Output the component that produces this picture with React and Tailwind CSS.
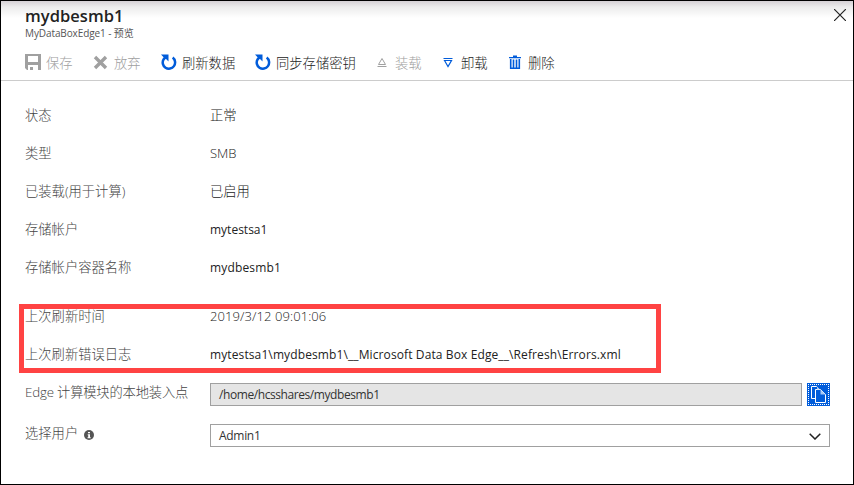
const SANS = "font-['Open_Sans','Noto_Sans_CJK_SC',sans-serif]";

function SaveIcon() {
  return (
    <svg width="16" height="16" viewBox="0 0 16 16" fill="#a0a0a0" className="shrink-0">
      <path fillRule="evenodd" d="M0 0h16v16h-3v-5H3v5H2L0 14zM3 2v6h10V2z" />
      <path d="M5 13h3v3H5z" />
    </svg>
  );
}

function DiscardIcon() {
  return (
    <svg width="15" height="15" viewBox="0 0 15 15" className="shrink-0">
      <path d="M2 2l11 11M13 2L2 13" stroke="#a0a0a0" strokeWidth="3.400" fill="none" />
    </svg>
  );
}

function RefreshIcon() {
  return (
    <svg width="16" height="17" viewBox="0 0 16 17" className="shrink-0">
      <path d="M11.700 3.600A6.200 6.200 0 1 1 2.600 5.300L4.600 3.200" stroke="#015cda" strokeWidth="2.500" fill="none" />
      <path d="M0 .5H7.500V7.500L5.300 5.200 3 3.800z" fill="#015cda" />
    </svg>
  );
}

function TriangleIcon({ up }) {
  return (
    <svg width="10" height="11" viewBox="0 0 10 11" fill="none" className="shrink-0">
      {up ? (
        <path d="M1.500 7.500L5 1.500l3.500 6zM.5 9.500h9" stroke="#a0a0a0" />
      ) : (
        <path d="M1.500 3.500L5 9.500l3.500-6zM.5 1.500h9" stroke="#015cda" strokeWidth="1.200" />
      )}
    </svg>
  );
}

function TrashIcon() {
  return (
    <svg width="12" height="15" viewBox="0 0 12 15" className="shrink-0">
      <path d="M4 .5h4V2h4v1.300H0V2h4z" fill="#015cda" />
      <path d="M1.700 4v9.300h8.600V4M4.500 4.500v8M7.500 4.500v8" stroke="#015cda" strokeWidth="1.600" fill="none" />
    </svg>
  );
}

function Command({ icon, label, disabled, width, gap }) {
  return (
    <div className={`flex h-5 items-center ${width} ${gap} ${disabled ? "text-[#a0a0a0]" : "text-[#222]"}`}>
      {icon}
      <span className="pt-[3px] whitespace-nowrap text-[13.300px] font-light">{label}</span>
    </div>
  );
}

function Row({ label, children }) {
  return (
    <div className="flex h-[38px] items-center">
      <div className="w-[185px] shrink-0 whitespace-nowrap font-light text-[#444]">{label}</div>
      <div className="whitespace-nowrap text-[#222]">{children}</div>
    </div>
  );
}

export default function App() {
  return (
    <div className={`relative flex h-[485px] w-[854px] flex-col overflow-hidden border border-black bg-white ${SANS}`}>
      <header className="flex h-[80px] shrink-0 flex-col border-b border-[#ccc] bg-[linear-gradient(#d5d1d5,#ececec_6px,#fff_17px)] pl-6">
        <div className="flex h-[41px] justify-between pr-[7px]">
          <div>
            <h1 className="mt-[3px] h-[23px] text-[16.500px] leading-[23px] font-semibold tracking-[0.050px] text-[#222]">mydbesmb1</h1>
            <p className="h-3 text-[10px] leading-3 tracking-[-0.100px] text-[#555]">MyDataBoxEdge1 - 预览</p>
          </div>
          <svg width="12" height="12" viewBox="0 0 12 12" className="mt-2">
            <path d="M0 0l12 12M12 0L0 12" stroke="#222" strokeWidth="1.200" />
          </svg>
        </div>
        <div className="mt-[10px] flex">
          <Command icon={<SaveIcon />} label="保存" disabled width="w-[68px]" gap="gap-[5px]" />
          <Command icon={<DiscardIcon />} label="放弃" disabled width="w-[68px]" gap="gap-[6px]" />
          <Command icon={<RefreshIcon />} label="刷新数据" width="w-[94px]" gap="gap-[5px]" />
          <Command icon={<RefreshIcon />} label="同步存储密钥" width="w-[122px]" gap="gap-[5px]" />
          <Command icon={<TriangleIcon up />} label="装载" disabled width="w-[66px]" gap="gap-[8px]" />
          <Command icon={<TriangleIcon />} label="卸载" width="w-[66px]" gap="gap-[8px]" />
          <Command icon={<TrashIcon />} label="删除" width="w-[60px]" gap="gap-[7px]" />
        </div>
      </header>

      <main className="pt-[16px] pl-6 text-[13.300px]">
        <Row label="状态"><span className="font-light">正常</span></Row>
        <Row label="类型"><span className="text-[13px] font-light">SMB</span></Row>
        <Row label="已装载(用于计算)"><span className="font-light">已启用</span></Row>
        <Row label="存储帐户"><span className="text-[12px]">mytestsa1</span></Row>
        <Row label="存储帐户容器名称"><span className="text-[12px] tracking-[0.150px]">mydbesmb1</span></Row>
        <div className="mt-[17px] -ml-[6px] h-[69px] w-[642px] border-[5px] border-[#ff4343] pl-px">
          <div className="-mt-[11px]">
            <Row label="上次刷新时间"><span className="text-[13px] font-light tracking-[0.080px]">2019/3/12 09:01:06</span></Row>
            <Row label="上次刷新错误日志"><span className="text-[12px] tracking-[0.110px]">mytestsa1\mydbesmb1\__Microsoft Data Box Edge__\Refresh\Errors.xml</span></Row>
          </div>
        </div>
        <div className="mt-[10px] flex h-[23px]">
          <div className="w-[185px] leading-[19px] font-light tracking-[-0.180px] whitespace-nowrap text-[#444]">Edge 计算模块的本地装入点</div>
          <div className="flex h-[23px] w-[592px] items-center border border-[#a0a0a0] bg-[#e5e5e5] pt-px pl-2 text-[12px] tracking-[-0.420px] text-[#333]">/home/hcsshares/mydbesmb1</div>
          <button className="ml-[5px] flex h-[23px] w-[23px] items-center justify-center bg-[#015cda] p-px">
            <span className="flex h-[21px] w-[21px] items-center justify-center border border-dotted border-white">
              <svg width="15" height="17" viewBox="0 0 15 17" fill="#015cda" stroke="#fff">
                <path d="M6 12.500H.5V.500h5l3 3" />
                <path d="M4.500 3.500h5l5 5v8h-10z" />
                <path d="M6 .5l3 3H6zM9.500 3.500l5 5h-5z" fill="#a6c8f5" stroke="none" />
              </svg>
            </span>
          </button>
        </div>
        <div className="mt-[18px] flex h-[23px]">
          <div className="flex h-[20px] w-[185px] items-center gap-[6px] font-light text-[#444]">
            选择用户
            <svg width="10" height="10" viewBox="0 0 10 10" className="mt-[2px]">
              <circle cx="5" cy="5" r="5" fill="#555" />
              <path d="M4 2h2v1.300H4zM3.700 4.200H6v3h.7v1H3.500v-1h.7v-2h-.5z" fill="#fff" />
            </svg>
          </div>
          <div className="flex h-[23px] w-[620px] items-center justify-between border border-[#a0a0a0] pt-px pr-[8px] pl-2 text-[12px] tracking-[-0.300px] text-[#333]">
            Admin1
            <svg width="12" height="7" viewBox="0 0 12 7" fill="none" stroke="#222" strokeWidth="1.500" className="mt-[1px]">
              <path d="M.7.700L6 6l5.300-5.300" />
            </svg>
          </div>
        </div>
      </main>
    </div>
  );
}
